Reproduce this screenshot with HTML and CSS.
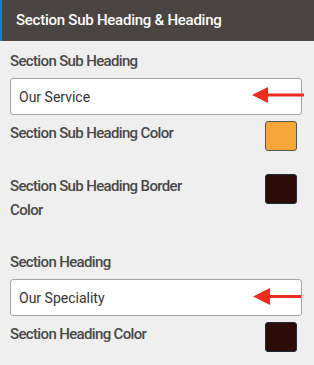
FILE: index.html
```html
<!DOCTYPE html>
<html lang="en">
<head>
    <meta charset="UTF-8">
    <meta name="viewport" content="width=device-width, initial-scale=1.0">
    <title>Section Settings</title>
    <link rel="stylesheet" href="styles.css">
</head>
<body>
    <div class="panel">
        <div class="panel-head">Section Sub Heading &amp; Heading</div>
        <div class="panel-body">
            <div class="field">
                <label class="field-label" for="subHeading">Section Sub Heading</label>
                <div class="input-wrap">
                    <input type="text" id="subHeading" class="text-input" value="Our Service">
                    <svg class="arrow arrow-one" width="52" height="16" viewBox="0 0 52 16">
                        <polygon points="0,8 16,0 16,16" fill="#ef2b1d"/>
                        <rect x="14" y="6.5" width="38" height="3" fill="#ef2b1d"/>
                    </svg>
                </div>
            </div>

            <div class="color-row">
                <span class="field-label">Section Sub Heading Color</span>
                <span class="swatch swatch-orange"></span>
            </div>

            <div class="color-row">
                <span class="field-label">Section Sub Heading Border Color</span>
                <span class="swatch swatch-dark"></span>
            </div>

            <div class="field">
                <label class="field-label" for="heading">Section Heading</label>
                <div class="input-wrap">
                    <input type="text" id="heading" class="text-input" value="Our Speciality">
                    <svg class="arrow arrow-two" width="48" height="17" viewBox="0 0 48 17">
                        <polygon points="0,8.5 17,0 17,17" fill="#ef2b1d"/>
                        <rect x="15" y="7" width="33" height="3" fill="#ef2b1d"/>
                    </svg>
                </div>
            </div>

            <div class="color-row">
                <span class="field-label">Section Heading Color</span>
                <span class="swatch swatch-dark"></span>
            </div>
        </div>
    </div>
</body>
</html>
```

FILE: styles.css
```css
body {
    margin: 0;
    padding: 0;
    background-color: #efefef;
    font-family: Roboto, "Liberation Sans", sans-serif;
    color: #474747;
}

.panel-head {
    height: 41px;
    line-height: 41px;
    padding-left: 14px;
    border-left: 2px solid #1d7fc2;
    background-color: #4a4543;
    color: #fff;
    font-size: 15px;
    font-weight: 500;
    letter-spacing: -0.25px;
}

.panel-body {
    padding: 8px 12px 0 10px;
}

.field-label {
    display: block;
    margin-bottom: 5px;
    font-size: 15px;
    font-weight: 500;
    line-height: 24px;
    letter-spacing: -0.65px;
    color: #484848;
}

.field {
    margin-bottom: 6px;
}

.input-wrap {
    position: relative;
}

.text-input {
    display: block;
    box-sizing: border-box;
    width: 100%;
    height: 37px;
    margin: 0;
    padding: 0 8px;
    border: 1px solid #a3a3a3;
    border-radius: 3px;
    background: #fff;
    font-family: Roboto, "Liberation Sans", sans-serif;
    font-size: 14px;
    color: #333;
}

.arrow {
    position: absolute;
}

.arrow-one {
    left: 242px;
    top: 9px;
}

.arrow-two {
    left: 243px;
    top: 9px;
}

.color-row {
    display: flex;
    justify-content: space-between;
    align-items: flex-start;
    padding-right: 5px;
    margin-bottom: 23px;
}

.color-row .field-label {
    max-width: 185px;
}

.swatch {
    box-sizing: border-box;
    width: 32px;
    height: 30px;
    border-radius: 3px;
    border: 1px solid #4d5a50;
}

.swatch-orange {
    background-color: #f5a63b;
}

.swatch-dark {
    background-color: #2d0c07;
    border-color: #1f2b3a;
}
```
